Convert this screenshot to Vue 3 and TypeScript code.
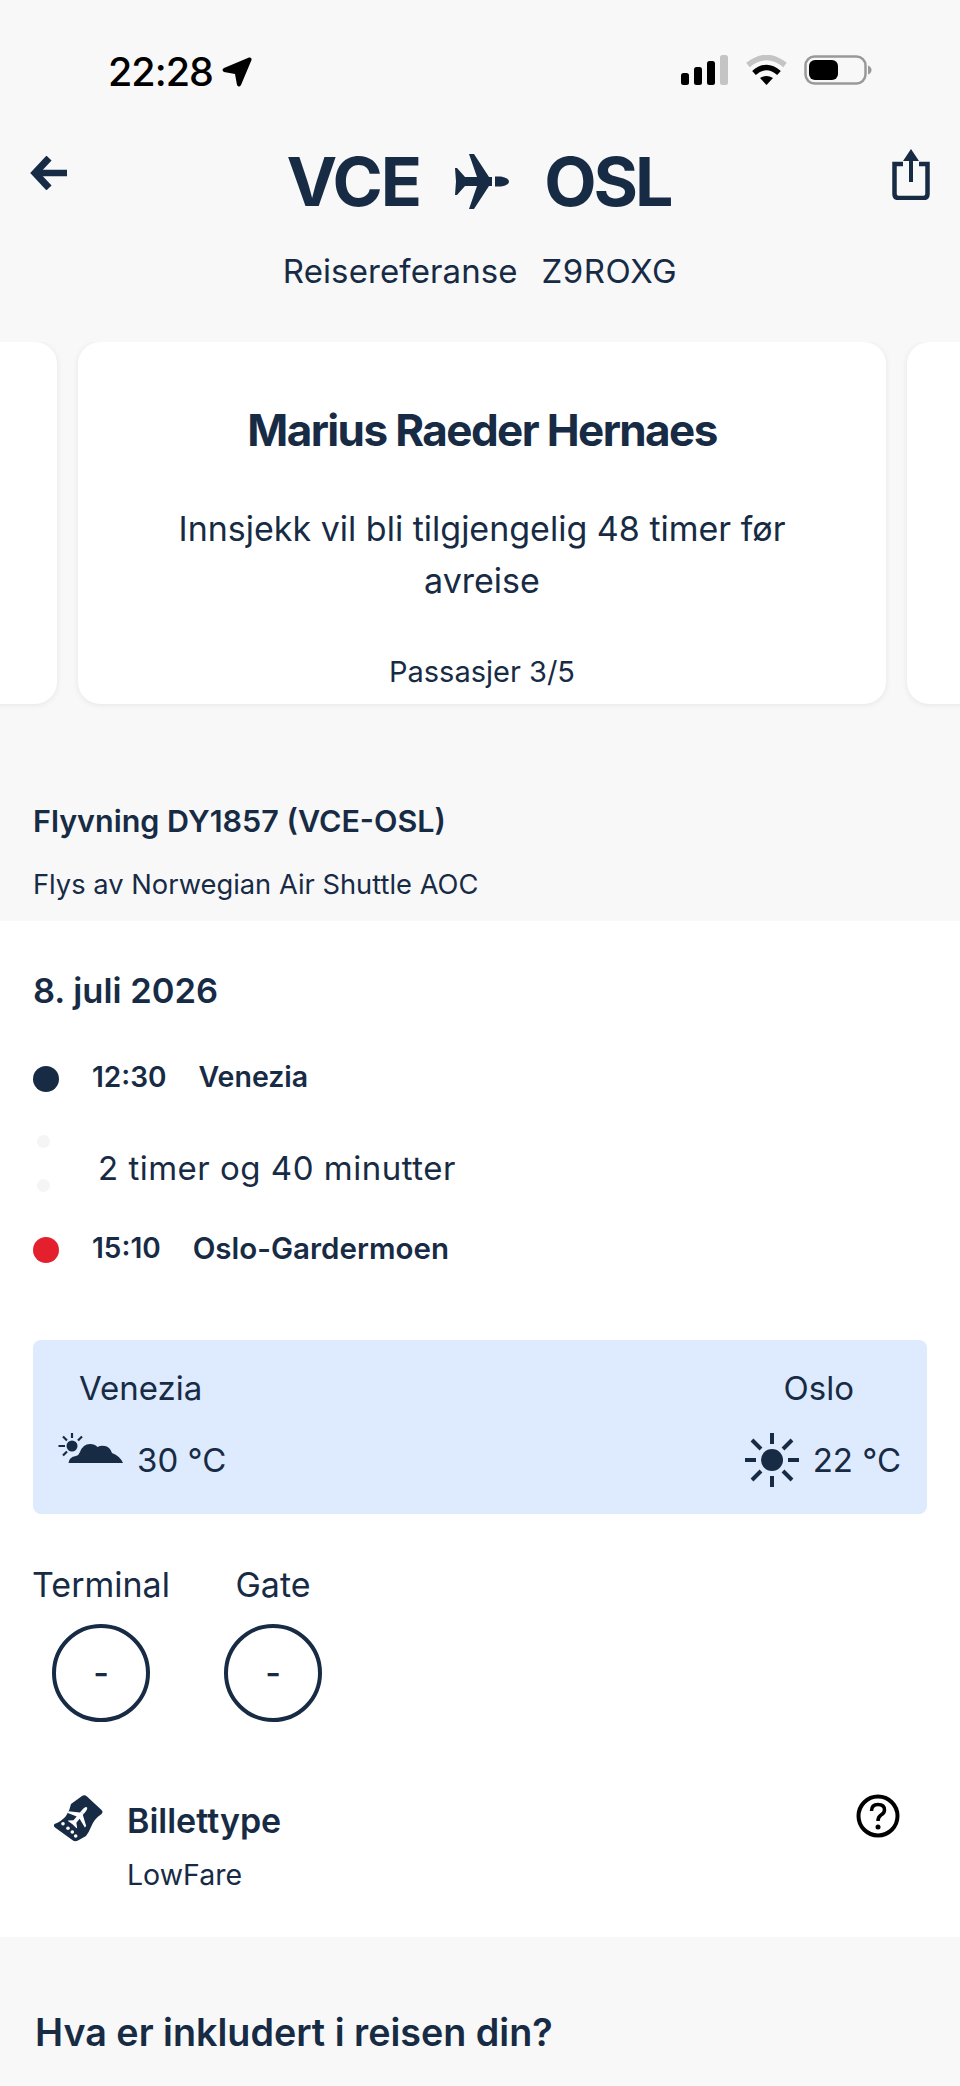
<template>
  <div class="page">
    <div class="status">
      <div class="status__time">
        <span>22:28</span>
        <svg width="30" height="30" viewBox="0 0 30 30"><path d="M2 11 L27 0.500 Q30 0 29.500 3 L19 28 Q17 31 15 28 L13 17 L2 15 Q-1 13 2 11 Z" fill="#000" /></svg>
      </div>
      <div class="status__icons">
        <svg width="48" height="30" viewBox="0 0 48 30">
          <rect x="0" y="18" width="8" height="12" rx="2.500" fill="#000" />
          <rect x="13" y="12" width="8" height="18" rx="2.500" fill="#000" />
          <rect x="26" y="6" width="8" height="24" rx="2.500" fill="#000" />
          <rect x="39" y="0" width="8" height="30" rx="2.500" fill="#c4c4c4" />
        </svg>
        <svg width="41" height="30" viewBox="0 0 41 30">
          <path d="M2 10 Q20.500 -5 39 10" fill="none" stroke="#c4c4c4" stroke-width="5.500" />
          <path d="M8 18 Q20.500 7 33 18" fill="none" stroke="#000" stroke-width="5.500" />
          <path d="M14 23 L20.500 30 L27 23 Q20.500 19 14 23 Z" fill="#000" />
        </svg>
        <svg width="68" height="30" viewBox="0 0 68 30">
          <rect x="1.500" y="1.500" width="60" height="27" rx="9" fill="none" stroke="#999" stroke-width="2.500" />
          <rect x="5" y="5" width="29" height="20" rx="6" fill="#000" />
          <path d="M64 10.500 Q67.500 12 67.500 15 Q67.500 18 64 19.500 Z" fill="#999" />
        </svg>
      </div>
    </div>

    <header class="head">
      <button type="button" class="head__btn head__btn--back">
        <svg width="38" height="34" viewBox="0 0 38 34"><path d="M19 2 L5 17 L19 32" fill="none" stroke="#172b45" stroke-width="7" /><path d="M6 17 H37" fill="none" stroke="#172b45" stroke-width="6.500" /></svg>
      </button>
      <h1 class="head__route">
        <span class="head__from">VCE</span>
        <svg width="54" height="55" viewBox="0 0 54 55">
          <path d="M14 0 H19 L34 23 H37 V32 H34 L19 55 H14 L22 32 H10 L2 41 H0 L1 27.500 L0 14 H2 L10 23 H22 Z" fill="#172b45" />
          <path d="M40 22.500 H46 Q54 24 54 27.500 Q54 31 46 32.500 H40 Z" fill="#172b45" />
        </svg>
        <span>OSL</span>
      </h1>
      <button type="button" class="head__btn head__btn--share">
        <svg width="38" height="52" viewBox="0 0 38 52">
          <path d="M11 16 H2.500 V46 Q2.500 50 6.500 50 H31.500 Q35.500 50 35.500 46 V16 H27" fill="none" stroke="#172b45" stroke-width="4.500" />
          <path d="M19 34 V8" fill="none" stroke="#172b45" stroke-width="4" />
          <path d="M11 13 L19 1 L27 13 Z" fill="#172b45" />
        </svg>
      </button>
    </header>
    <p class="ref"><span class="ref__label">Reisereferanse</span><span>Z9ROXG</span></p>

    <div class="carousel">
      <div class="card"></div>
      <div class="card">
        <h2 class="card__name">Marius Raeder Hernaes</h2>
        <p class="card__text">Innsjekk vil bli tilgjengelig 48 timer før avreise</p>
        <p class="card__count">Passasjer 3/5</p>
      </div>
      <div class="card"></div>
    </div>

    <section class="flight">
      <h3 class="flight__title">Flyvning DY1857 (VCE-OSL)</h3>
      <p class="flight__by">Flys av Norwegian Air Shuttle AOC</p>
    </section>

    <section class="details">
      <h3 class="details__date">8. juli 2026</h3>
      <div class="stop stop--from">
        <i class="dot dot--navy"></i><b>12:30</b><b class="stop__place">Venezia</b>
      </div>
      <div class="duration">
        <div class="duration__dots"><i></i><i></i></div>
        <span>2 timer og 40 minutter</span>
      </div>
      <div class="stop stop--to">
        <i class="dot dot--red"></i><b>15:10</b><b class="stop__place">Oslo-Gardermoen</b>
      </div>

      <div class="weather">
        <div class="weather__col">
          <span class="weather__city weather__city--from">Venezia</span>
          <div class="weather__temp">
            <svg class="weather__cloud" width="66" height="32" viewBox="0 0 66 32">
              <circle cx="14" cy="14" r="5.500" fill="#172b45" />
              <path d="M14 1 V6 M0.500 14 H7 M5 4.500 L9 8.500 M24 4.500 L20 8.500 M5 23.500 L9 19.500" stroke="#172b45" stroke-width="2.200" fill="none" />
              <path d="M10.500 31 Q11 25 18 24 Q21 23 22 20 Q25 12 32 12 Q37 12 39.500 15 Q43 13 47 14 Q52 15 54 21 Q62 24 65 31 Z" fill="#172b45" />
            </svg>
            <span>30 °C</span>
          </div>
        </div>
        <div class="weather__col weather__col--end">
          <span class="weather__city weather__city--to">Oslo</span>
          <div class="weather__temp">
            <svg width="56" height="56" viewBox="0 0 56 56">
              <circle cx="28" cy="28" r="11" fill="#172b45" />
              <path d="M28 1 V12 M28 44 V55 M1 28 H12 M44 28 H55 M8 8 L17 17 M48 8 L39 17 M8 48 L17 39 M48 48 L39 39" stroke="#172b45" stroke-width="4" fill="none" />
            </svg>
            <span>22 °C</span>
          </div>
        </div>
      </div>

      <div class="gates">
        <div class="gate gate--terminal">
          <span>Terminal</span>
          <div class="gate__ring">-</div>
        </div>
        <div class="gate gate--gate">
          <span>Gate</span>
          <div class="gate__ring">-</div>
        </div>
      </div>

      <div class="fare">
        <svg class="fare__icon" width="50" height="47" viewBox="0 0 50 47">
          <path d="M29 1 Q31.500 -0.500 34 1.500 L48.500 15 Q50.500 17 48.500 19 Q41 24 38 32 Q36 37 33 41 L25 45.500 Q22 47 20 45.500 L2 32.500 Q0 31 1.500 29 Q9 26 13 21 Q17 15 18 9 Z" fill="#172b45" />
          <g transform="translate(26.500 21) rotate(-50) scale(0.42) translate(-27 -27.500)" fill="#fff">
            <path d="M14 0 H19 L34 23 H37 V32 H34 L19 55 H14 L22 32 H10 L2 41 H0 L1 27.500 L0 14 H2 L10 23 H22 Z" />
            <path d="M37 23 H46 Q54 24 54 27.500 Q54 31 46 32 H37 Z" />
          </g>
          <circle cx="10" cy="28.700" r="1.800" fill="#fff" />
          <circle cx="15" cy="33.300" r="1.800" fill="#fff" />
          <circle cx="19.300" cy="37" r="1.800" fill="#fff" />
          <circle cx="22.700" cy="41" r="1.800" fill="#fff" />
        </svg>
        <div class="fare__text">
          <b>Billettype</b>
          <span>LowFare</span>
        </div>
        <svg class="fare__help" width="44" height="44" viewBox="0 0 44 44">
          <circle cx="22" cy="22" r="19.500" fill="none" stroke="#000" stroke-width="4" />
          <path d="M15.500 17 Q15.500 10.500 22 10.500 Q28.500 10.500 28.500 16 Q28.500 19 25 21 Q22 23 22 27" fill="none" stroke="#000" stroke-width="3.500" />
          <circle cx="22" cy="33" r="2.500" fill="#000" />
        </svg>
      </div>
    </section>

    <h3 class="included">Hva er inkludert i reisen din?</h3>
  </div>
</template>

<script setup lang="ts">
</script>

<style>
body {
  margin: 0;
  background-color: #f8f8f8;
}
</style>

<style scoped>
.page {
  width: 960px;
  height: 2086px;
  overflow: hidden;
  background-color: #f8f8f8;
  color: #172b45;
  font-family: Inter, "Noto Sans", sans-serif;
}

h1, h2, h3, p {
  margin: 0;
}

.status {
  display: flex;
  justify-content: space-between;
  align-items: center;
  height: 30px;
  padding: 55px 88px 0 108px;
}

.status__time {
  display: flex;
  align-items: center;
  gap: 9px;
  margin-top: 3px;
  color: #000;
  font-size: 39.500px;
  font-weight: 500;
  letter-spacing: -1px;
}

.status__icons {
  display: flex;
  align-items: center;
  gap: 17px;
}

.head {
  display: grid;
  grid-template-columns: 1fr auto 1fr;
  align-items: start;
  padding: 59px 30px 0;
}

.head__btn {
  display: block;
  padding: 0;
  border: none;
  background: none;
}

.head__btn--back {
  justify-self: start;
  margin-top: 12px;
}

.head__btn--share {
  justify-self: end;
  margin-top: 4px;
}

.head__route {
  display: flex;
  align-items: center;
  gap: 35px;
  margin-top: 2px;
  margin-left: -3px;
  font-size: 68px;
  line-height: 70px;
  font-weight: 700;
  letter-spacing: -3px;
}

.head__from {
  letter-spacing: -2px;
}

.ref {
  display: flex;
  justify-content: center;
  gap: 24px;
  margin-top: 35px;
  font-size: 33px;
  line-height: 40px;
  letter-spacing: 0.5px;
}

.ref__label {
  letter-spacing: 0.1px;
}

.carousel {
  display: flex;
  justify-content: center;
  gap: 21px;
  margin-top: 51px;
  padding: 0 0 20px 4px;
  overflow: hidden;
}

.card {
  flex-shrink: 0;
  box-sizing: border-box;
  width: 808px;
  height: 362px;
  padding: 63px 50px 0;
  border-radius: 22px;
  background-color: #fff;
  box-shadow: 0 1px 6px rgba(0, 0, 0, 0.08);
  text-align: center;
}

.card__name {
  font-size: 44px;
  line-height: 50px;
  font-weight: 700;
  letter-spacing: -1.600px;
}

.card__text {
  margin-top: 48px;
  font-size: 34px;
  line-height: 52px;
}

.card__count {
  margin-top: 47px;
  font-size: 29px;
  line-height: 36px;
}

.flight {
  padding: 77px 33px 0;
}

.flight__title {
  font-size: 30.500px;
  line-height: 40px;
  font-weight: 600;
}

.flight__by {
  margin-top: 26px;
  font-size: 27.300px;
  line-height: 36px;
}

.details {
  box-sizing: border-box;
  height: 1016px;
  margin-top: 18px;
  padding: 48px 33px 0;
  background-color: #fff;
}

.details__date {
  font-size: 34.500px;
  line-height: 44px;
  font-weight: 600;
}

.stop {
  display: flex;
  align-items: center;
  font-size: 28px;
  line-height: 40px;
}

.stop b {
  font-weight: 600;
}

.stop--from {
  margin-top: 44px;
}

.stop--to {
  margin-top: 36px;
}

.stop__place {
  margin-left: 32px;
  font-size: 28.500px;
}

.stop--to .stop__place {
  font-size: 29.500px;
}

.dot {
  flex-shrink: 0;
  width: 26px;
  height: 26px;
  margin-top: 4px;
  margin-right: 33px;
  border-radius: 50%;
}

.dot--navy {
  background-color: #172b45;
}

.dot--red {
  background-color: #e5202e;
}

.duration {
  display: flex;
  align-items: center;
  gap: 48px;
  margin-top: 38px;
  font-size: 33px;
  line-height: 40px;
  letter-spacing: 0.5px;
}

.duration span {
  margin-top: 9px;
}

.duration__dots {
  display: flex;
  flex-direction: column;
  gap: 31px;
  width: 13px;
  margin-left: 4px;
}

.duration__dots i {
  width: 13px;
  height: 13px;
  border-radius: 50%;
  background-color: #f5f5f5;
}

.weather {
  display: flex;
  justify-content: space-between;
  box-sizing: border-box;
  height: 174px;
  margin-top: 72px;
  padding: 28px 26px 0 25px;
  border-radius: 8px;
  background-color: #deeafd;
  font-size: 33px;
  line-height: 40px;
}

.weather__col {
  display: flex;
  flex-direction: column;
}

.weather__col--end {
  align-items: flex-end;
}

.weather__city--from {
  margin-left: 21px;
}

.weather__city--to {
  margin-right: 47px;
}

.weather__temp {
  display: flex;
  align-items: center;
  gap: 13px;
  height: 56px;
  margin-top: 24px;
}

.weather__cloud {
  align-self: flex-start;
}

.gates {
  display: flex;
  margin-top: 51px;
  font-size: 34px;
  line-height: 40px;
}

.gate {
  display: flex;
  flex-direction: column;
  align-items: center;
  gap: 19px;
}

.gate--terminal {
  width: 136px;
}

.gate--gate {
  width: 172px;
  margin-left: 18px;
}

.gate__ring {
  display: flex;
  justify-content: center;
  align-items: center;
  box-sizing: border-box;
  width: 98px;
  height: 98px;
  border: 4px solid #172b45;
  border-radius: 50%;
  font-size: 34px;
  font-weight: 500;
}

.fare {
  display: flex;
  margin-top: 71px;
  padding: 0 27px 0 20px;
}

.fare__icon {
  flex-shrink: 0;
  margin-top: 2px;
}

.fare__text {
  display: flex;
  flex-direction: column;
  flex: 1;
  margin-left: 24px;
}

.fare__text b {
  margin-top: 8px;
  font-size: 34px;
  line-height: 40px;
  font-weight: 600;
}

.fare__text span {
  margin-top: 16px;
  font-size: 28.500px;
  line-height: 36px;
}

.fare__help {
  margin-top: 1px;
}

.included {
  padding: 72px 35px 0;
  font-size: 37.700px;
  line-height: 46px;
  font-weight: 600;
}
</style>
